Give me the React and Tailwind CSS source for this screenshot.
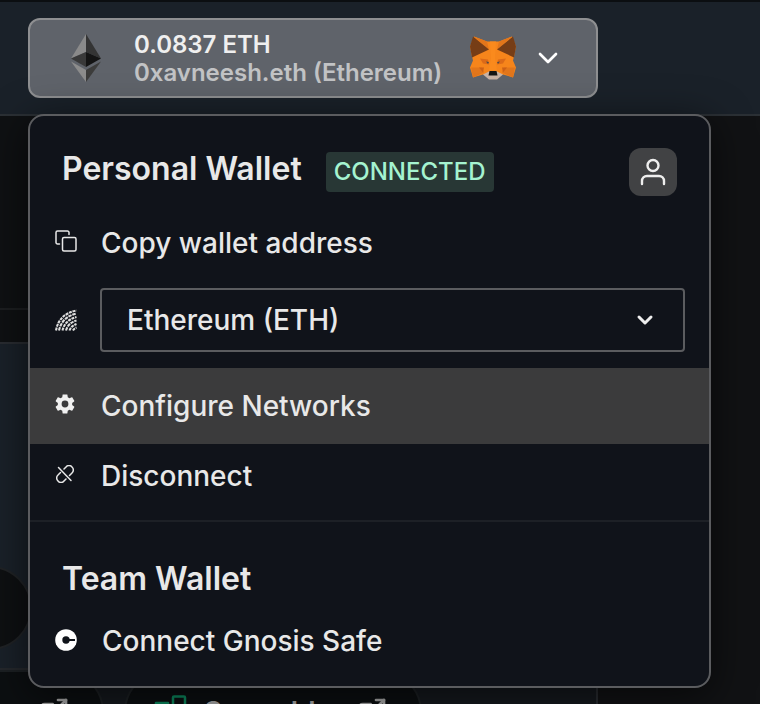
import clsx from "clsx";
import { ChevronDown, ExternalLink } from "lucide-react";

const CopyIcon = () => (
  <svg viewBox="0 0 22 22" className="h-[22px] w-[22px]" fill="none" stroke="#e8e8e8" strokeWidth="1.5" strokeLinecap="round" strokeLinejoin="round">
    <path d="M4.500 14H2.500A1.500 1.500 0 0 1 1 12.500V2.500A1.500 1.500 0 0 1 2.500 1H12.500A1.500 1.500 0 0 1 14 2.500V4.500" />
    <rect x="7.500" y="7.500" width="13.500" height="13.500" rx="1.500" />
  </svg>
);

const GearIcon = () => (
  <svg viewBox="2 2 20 20" className="h-5 w-5" fill="#f1f1f1">
    <path d="M19.140 12.940c.04-.3.06-.61.06-.94 0-.32-.02-.64-.07-.94l2.030-1.580c.18-.14.23-.41.12-.61l-1.920-3.320c-.12-.22-.37-.29-.59-.22l-2.390.96c-.5-.38-1.030-.7-1.620-.94l-.36-2.540c-.04-.24-.24-.41-.48-.41h-3.840c-.24 0-.43.17-.47.41l-.36 2.540c-.59.24-1.130.57-1.620.94l-2.390-.96c-.22-.08-.47 0-.59.22L2.740 8.870c-.12.21-.08.47.12.61l2.030 1.580c-.05.3-.09.63-.09.94s.02.64.07.94l-2.030 1.580c-.18.14-.23.41-.12.61l1.920 3.320c.12.22.37.29.59.22l2.390-.96c.5.38 1.030.7 1.620.94l.36 2.540c.05.24.24.41.48.41h3.840c.24 0 .44-.17.47-.41l.36-2.540c.59-.24 1.130-.56 1.620-.94l2.390.96c.22.08.47 0 .59-.22l1.920-3.320c.12-.22.07-.47-.12-.61l-2.010-1.580zM12 15.400a3.400 3.400 0 1 1 0-6.800 3.400 3.400 0 0 1 0 6.800z" />
  </svg>
);

const UnlinkIcon = () => (
  <svg viewBox="0 0 18 18" className="ml-px h-[18px] w-[18px]" fill="none" stroke="#e8e8e8" strokeWidth="1.5" strokeLinecap="round">
    <path d="M8 4 10 2a3.800 3.800 0 0 1 6 0a4 4 0 0 1 0 6l-2.500 2.500" />
    <path d="M10 14 8 16a3.800 3.800 0 0 1-6 0a4 4 0 0 1 0-6l2.500-2.500" />
    <path d="M2.500 2.500 15 15.500" />
  </svg>
);

// quarter fan made of dashed arcs around the bottom right corner
const NetworkIcon = () => (
  <svg viewBox="0 0 22 22" className="h-[22px] w-[22px]" fill="none" stroke="#dedede" strokeWidth="2.100">
    <path d="M1 21.500Q4 5 21.500 1.500" strokeDasharray="3 .8" />
    <path d="M4 21.500Q7 8 21.500 4.500" strokeDasharray="3.500 .8" />
    <path d="M7.500 21.500Q10 11 21.500 8" strokeDasharray="3 .8" />
    <path d="M11 21.500Q13 14 21.500 11.500" strokeDasharray="3.500 .8" />
    <path d="M14.500 21.500Q16 17 21.500 15" strokeDasharray="3 .8" />
    <path d="M18 21.500Q19 19.500 21.500 18.500" strokeDasharray="3 .8" />
  </svg>
);

const SafeIcon = () => (
  <svg viewBox="0 0 22 22" className="h-[22px] w-[22px]">
    <circle cx="11" cy="11" r="10.800" fill="#fff" />
    <circle cx="11" cy="11" r="3.700" fill="#10131a" />
    <path d="M11 11h9" stroke="#10131a" strokeWidth="2" />
  </svg>
);

const UserIcon = () => (
  <svg viewBox="0 0 26 28" className="h-7 w-[26px]" fill="none" stroke="#eeeeee" strokeWidth="2.400" strokeLinecap="round">
    <circle cx="13" cy="7.500" r="5.500" />
    <path d="M2 26v-3a5 5 0 0 1 5-5h12a5 5 0 0 1 5 5v3" />
  </svg>
);

const EthereumLogo = () => (
  <svg viewBox="0 0 30 48" className="h-12 w-[30px]">
    <path d="M15 0 0 24.500 15 18z" fill="#8a8a8a" />
    <path d="M15 0 30 24.500 15 18z" fill="#343434" />
    <path d="M15 18 0 24.500 15 33z" fill="#393939" />
    <path d="M15 18 30 24.500 15 33z" fill="#141414" />
    <path d="M0 27.500 15 36V48z" fill="#8c8c8c" />
    <path d="M30 27.500 15 36V48z" fill="#3c3c3b" />
  </svg>
);

const FoxLogo = () => (
  <svg viewBox="0 0 46 43" className="h-11 w-[46px]">
    <path d="M4 0 17 5H29L42 0 46 10 44 20 43 24 46 31 43 41 33 38 28 40H18L13 38 3 41 0 31 3 24 2 20 0 10z" fill="#f6851b" />
    <path d="M4 0 17 5 19 13z" fill="#e2761b" />
    <path d="M42 0 29 5 27 13z" fill="#e2761b" />
    <path d="M3 0 19 13 2 21 0 10z" fill="#763d16" />
    <path d="M43 0 27 13 44 21 46 10z" fill="#763d16" />
    <path d="M1 31H12L14 36 3 41z" fill="#e2761b" />
    <path d="M45 31H34L32 36 43 41z" fill="#e2761b" />
    <path d="M10 22 18 23 19 28 13 27z" fill="#dc6a18" />
    <path d="M36 22 28 23 27 28 33 27z" fill="#dc6a18" />
    <path d="M9 31H14L13 36z" fill="#cd6116" />
    <path d="M37 31H32L33 36z" fill="#cd6116" />
    <path d="M20 5H26L25 22 27 34H19L21 22z" fill="#fa8a1d" />
    <path d="M16 25 19 25.500 18 27.500z" fill="#4c4a48" />
    <path d="M30 25 27 25.500 28 27.500z" fill="#4c4a48" />
    <path d="M13 38 19 35H27L33 38 27 43H19z" fill="#c9b2a4" />
    <path d="M19.500 34.500H26.500L27.500 39H18.500z" fill="#161616" />
  </svg>
);

const BlocksIcon = () => (
  <svg viewBox="0 0 34 34" className="h-[34px] w-[34px]" fill="none" stroke="#0c8a5f" strokeWidth="2.500" strokeLinejoin="round">
    <rect x="19" y="1.500" width="12" height="12" rx="1" />
    <path d="M2 8H14V20H26V32H2zM2 20H14V32" />
  </svg>
);

const actions = [
  { label: "Configure Networks", icon: GearIcon, active: true },
  { label: "Disconnect", icon: UnlinkIcon }
];

function WalletMenu() {
  return (
    <section className="absolute top-[114px] right-[49px] left-7 z-10 rounded-2xl border-2 border-[#5b5c5f] bg-[#10131a] pb-[10px] shadow-[0_8px_40px_rgba(0,0,0,0.6)]">
      <div className="flex items-start px-8 pt-8">
        <h2 className="text-[32px] leading-[42px] font-semibold text-[#e8e8e8]">Personal Wallet</h2>
        <span className="mt-1 ml-6 rounded bg-[#283735] px-2 text-2xl leading-10 font-medium text-[#a5f3d0]">CONNECTED</span>
        <button type="button" aria-label="Profile" className="ml-auto flex h-12 w-12 items-center justify-center rounded-xl bg-[#414244]">
          <UserIcon />
        </button>
      </div>

      <button type="button" className="mt-3 flex h-[70px] w-full items-center px-[25px] text-left text-[28px] font-medium text-[#e8e8e8]">
        <span className="flex w-[46px] pb-1">
          <CopyIcon />
        </span>
        Copy wallet address
      </button>

      <div className="mt-[10px] mb-4 flex items-center pr-6 pl-[25px]">
        <span className="flex w-[45px] shrink-0">
          <NetworkIcon />
        </span>
        <div className="relative grow">
          <select aria-label="Network" className="h-16 w-full appearance-none rounded border-2 border-[#5b5c5f] bg-transparent px-[25px] text-[28px] font-medium text-[#e8e8e8]">
            <option>Ethereum (ETH)</option>
          </select>
          <ChevronDown className="pointer-events-none absolute top-5 right-7 h-6 w-6 text-[#eeeeee]" strokeWidth={3} />
        </div>
      </div>

      {actions.map(({ label, icon: Icon, active }) => (
        <button
          key={label}
          type="button"
          className={clsx(
            "flex w-full items-center px-[25px] text-left text-[28px] font-medium text-[#e8e8e8]",
            active ? "h-[76px] bg-[#3b3b3c]" : "h-16"
          )}
        >
          <span className="flex w-[46px] pb-1">
            <Icon />
          </span>
          {label}
        </button>
      ))}

      <div className="mt-3 border-t-2 border-[#1d2026] pt-9">
        <h2 className="px-8 text-[32px] leading-[42px] font-semibold text-[#e8e8e8]">Team Wallet</h2>
        <button type="button" className="mt-1.5 flex h-[70px] w-full items-center px-[25px] text-left text-[28px] font-medium text-[#e8e8e8]">
          <span className="flex w-[47px] pb-0.5">
            <SafeIcon />
          </span>
          Connect Gnosis Safe
        </button>
      </div>
    </section>
  );
}

export default function App() {
  return (
    <div className="relative h-screen overflow-hidden bg-[#111214] font-['Inter',sans-serif]">
      <header className="border-t-2 border-b-2 border-t-[#0b0e11] border-b-[#2b3035] bg-[#1a2129] pt-4 pr-[162px] pb-4 pl-7">
        <button type="button" className="flex h-20 w-full items-center rounded-xl border-2 border-[#8e8f91] bg-[#5f636a] pr-8 pl-[41px] text-left">
          <EthereumLogo />
          <span className="ml-[33px] flex flex-col pt-0.5 text-2xl leading-7 font-semibold whitespace-nowrap">
            <span className="text-[#efefef]">0.0837 ETH</span>
            <span className="text-[#c2c3c5]">0xavneesh.eth (Ethereum)</span>
          </span>
          <span className="ml-auto flex items-center gap-4">
            <FoxLogo />
            <ChevronDown className="h-8 w-8 text-white" />
          </span>
        </button>
      </header>

      <main className="mr-[162px] border-r-2 border-[#292c31] bg-[#0f1113]">
        <div className="h-48" />
        <div className="h-9 border-t-2 border-b-2 border-t-[#1c1e20] border-b-[#292c31]" />
        <div className="flex h-[324px] items-end bg-[#1a2129] pb-[18px]">
          <div className="-ml-[52px] h-[84px] w-[84px] rounded-full border-2 border-[#202326] bg-[#0e1012]" />
        </div>
        <div className="flex gap-5 border-t-2 border-[#25282c] bg-[#15191e]">
          <a
            href="#site"
            aria-label="Open site"
            className="-ml-24 flex h-[84px] w-[200px] items-center justify-end rounded-full border-2 border-[#1c2023] bg-[#0c0f11] pr-8 text-[#aaaaaa]"
          >
            <ExternalLink className="h-8 w-8" />
          </a>
          <a
            href="#scramble"
            className="flex h-[84px] w-[298px] items-center rounded-full border-2 border-[#1c2023] bg-[#0c0f11] pr-8 pl-7 text-[28px] font-semibold text-[#aaaaaa]"
          >
            <BlocksIcon />
            <span className="ml-4">Scramble</span>
            <ExternalLink className="ml-auto h-8 w-8" />
          </a>
        </div>
      </main>

      <WalletMenu />
    </div>
  );
}
